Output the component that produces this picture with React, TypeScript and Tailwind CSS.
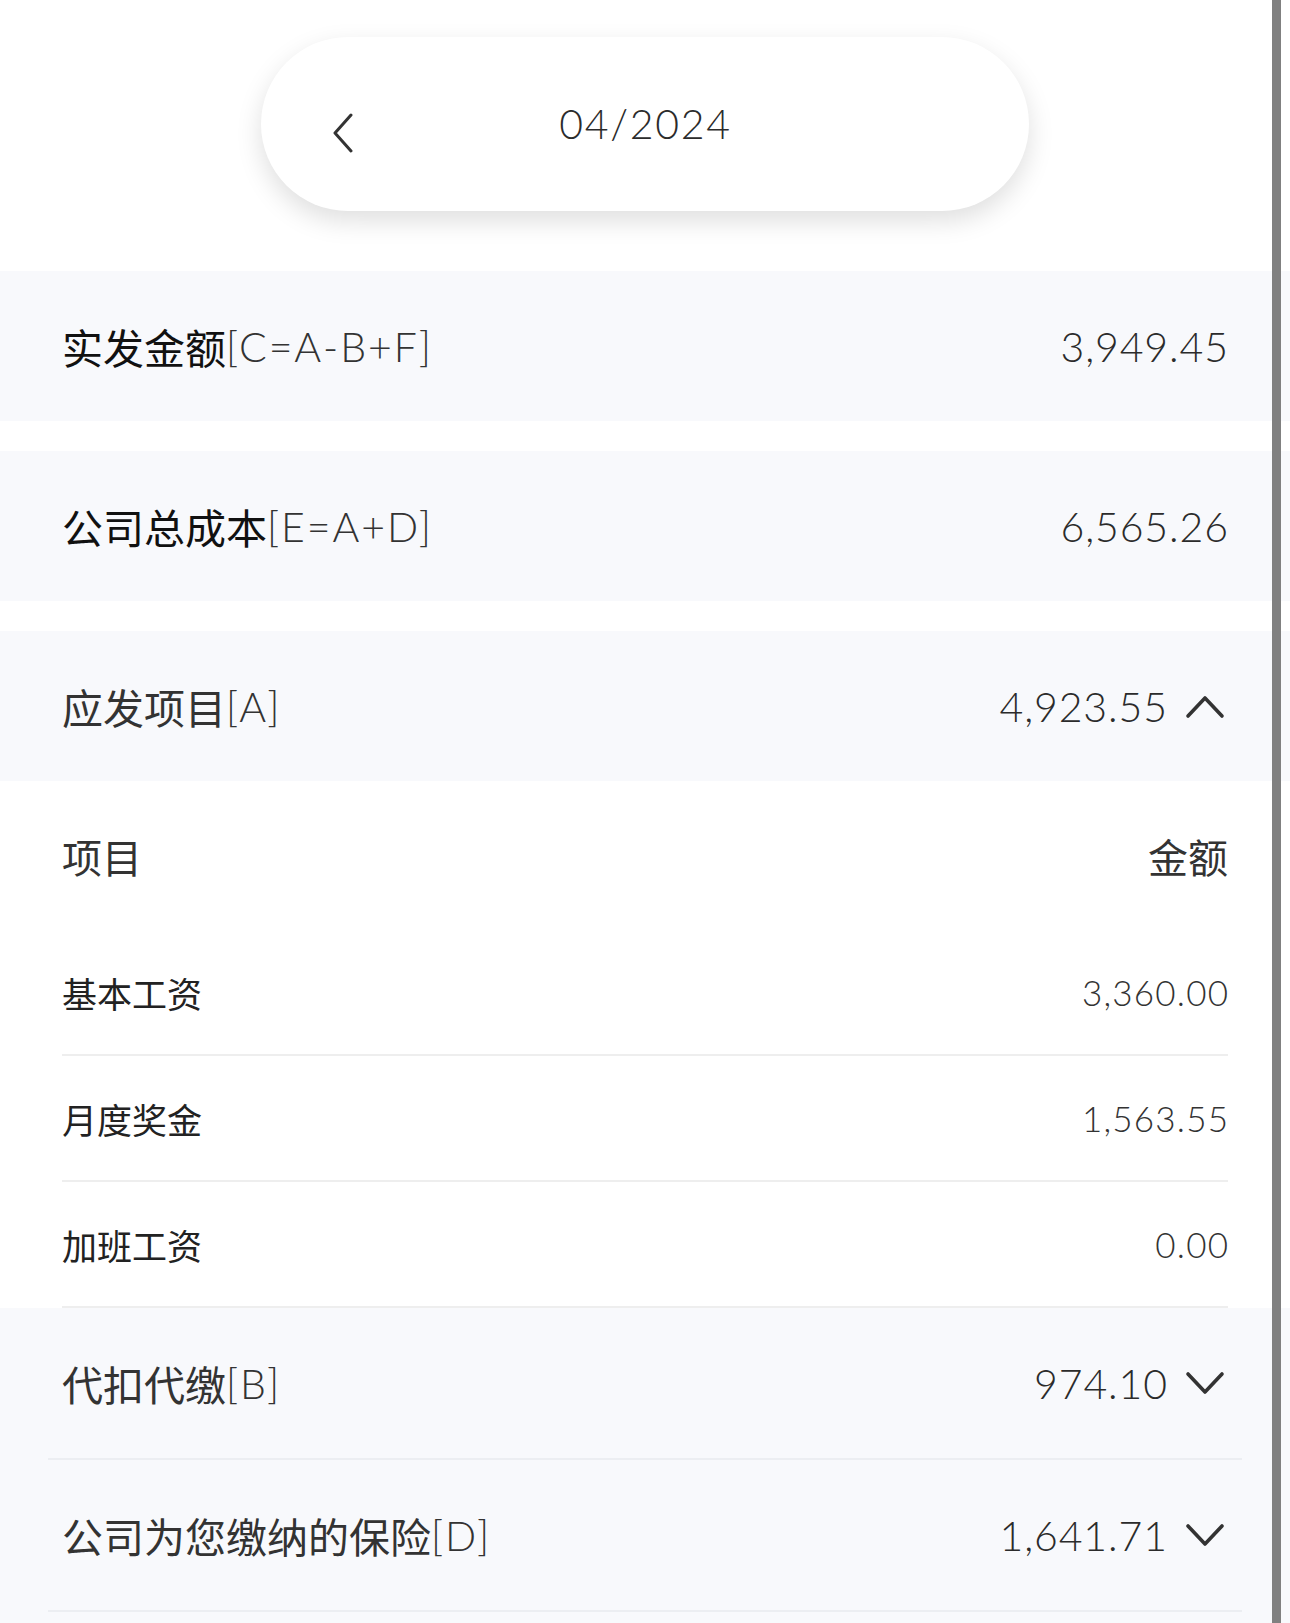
import React from "react";

const LATIN = "font-['Lato','Noto_Sans_CJK_SC',sans-serif]";
const CJK = "font-['Noto_Sans_CJK_SC',sans-serif]";

function ChevronUp() {
  return (
    <svg width="40" height="28" viewBox="0 0 40 28" className="ml-[18px] mr-[3px] shrink-0">
      <polyline points="3,24 20,6 37,24" fill="none" stroke="#333" strokeWidth="3.6" strokeLinecap="round" strokeLinejoin="round" />
    </svg>
  );
}

function ChevronDown() {
  return (
    <svg width="40" height="28" viewBox="0 0 40 28" className="ml-[18px] mr-[3px] shrink-0">
      <polyline points="3,5 20,23 37,5" fill="none" stroke="#333" strokeWidth="3.6" strokeLinecap="round" strokeLinejoin="round" />
    </svg>
  );
}

function Label({ cn, en, strong }: { cn: string; en: string; strong?: boolean }) {
  return (
    <div className="flex items-center text-[41px] leading-none">
      <span className={`${CJK} font-normal ${strong ? "text-[#111]" : "text-[#333]"}`}>{cn}</span>
      <span className={`${LATIN} font-light tracking-[1.9px] text-[#333]`}>{en}</span>
    </div>
  );
}

function Value({ v }: { v: string }) {
  return <span className={`${LATIN} font-light tracking-[0.9px] mr-[-0.9px] text-[41px] leading-none text-[#2b2b2b]`}>{v}</span>;
}

const items = [
  { name: "基本工资", value: "3,360.00" },
  { name: "月度奖金", value: "1,563.55" },
  { name: "加班工资", value: "0.00" },
];

export default function App() {
  return (
    <div className="relative min-h-[1623px] bg-white flex flex-col overflow-hidden">
      {/* month pill */}
      <div className="pt-[37px] flex justify-center">
        <div className="w-[768px] h-[174px] rounded-full bg-white shadow-[0_10px_26px_rgba(0,0,0,0.13)] flex items-center pl-[71px]">
          <svg width="22" height="40" viewBox="0 0 22 40" className="shrink-0 mt-[18px]">
            <polyline points="19,2 3,20 19,38" fill="none" stroke="#333" strokeWidth="3" strokeLinecap="round" strokeLinejoin="round" />
          </svg>
          <div className={`flex-1 text-center pr-[92px] ${LATIN} font-light tracking-[1.7px] text-[41px] leading-none text-[#2b2b2b] -mt-[2px]`}>
            04/2024
          </div>
        </div>
      </div>

      {/* summary rows */}
      <div className="mt-[60px] h-[150px] bg-[#f8f9fc] flex items-center justify-between px-[62px]">
        <Label cn="实发金额" en="[C=A-B+F]" strong />
        <Value v="3,949.45" />
      </div>
      <div className="mt-[30px] h-[150px] bg-[#f8f9fc] flex items-center justify-between px-[62px]">
        <Label cn="公司总成本" en="[E=A+D]" strong />
        <Value v="6,565.26" />
      </div>
      <div className="mt-[30px] h-[150px] bg-[#f8f9fc] flex items-center justify-between px-[62px]">
        <Label cn="应发项目" en="[A]" />
        <div className="flex items-center">
          <Value v="4,923.55" />
          <ChevronUp />
        </div>
      </div>

      {/* expanded section */}
      <div className="bg-white px-[62px]">
        <div className="h-[149px] flex items-center justify-between">
          <span className={`${CJK} text-[40px] leading-none text-[#333]`}>项目</span>
          <span className={`${CJK} text-[40px] leading-none text-[#333]`}>金额</span>
        </div>
        {items.map((it) => (
          <div key={it.name} className="h-[126px] border-b-2 border-[#eeeeee] flex items-center justify-between">
            <span className={`${CJK} text-[35px] leading-none text-[#222]`}>{it.name}</span>
            <span className={`${LATIN} font-light tracking-[1.2px] mr-[-1.2px] text-[35px] leading-none text-[#333]`}>{it.value}</span>
          </div>
        ))}
      </div>

      {/* collapsed sections */}
      <div className="flex-1 bg-[#f8f9fc]">
        <div className="mx-[48px] px-[14px] h-[152px] border-b-2 border-[#eceef2] flex items-center justify-between">
          <Label cn="代扣代缴" en="[B]" />
          <div className="flex items-center">
            <Value v="974.10" />
            <ChevronDown />
          </div>
        </div>
        <div className="mx-[48px] px-[14px] h-[152px] border-b-2 border-[#eceef2] flex items-center justify-between">
          <Label cn="公司为您缴纳的保险" en="[D]" />
          <div className="flex items-center">
            <Value v="1,641.71" />
            <ChevronDown />
          </div>
        </div>
      </div>

      {/* scrollbar overlay */}
      <div className="absolute top-0 bottom-0 right-[9px] w-[9px] bg-[#808080]" />
    </div>
  );
}
